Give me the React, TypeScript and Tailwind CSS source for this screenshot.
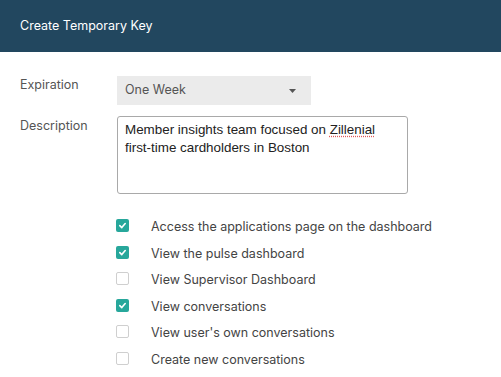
const PERMISSIONS = [
  { label: 'Access the applications page on the dashboard', checked: true },
  { label: 'View the pulse dashboard', checked: true },
  { label: 'View Supervisor Dashboard', checked: false },
  { label: 'View conversations', checked: true },
  { label: "View user's own conversations", checked: false },
  { label: 'Create new conversations', checked: false },
]

function Check({ checked }: { checked: boolean }) {
  if (!checked) {
    return <span className="block h-[13px] w-[13px] rounded-[2px] border border-[#cfcfcf] bg-white" />
  }
  return (
    <span className="flex h-[13px] w-[13px] items-center justify-center rounded-[2px] bg-[#27a79b]">
      <svg width="9" height="9" viewBox="0 0 10 10" fill="none">
        <path d="M2 5.2 L4.2 7.3 L8 2.8" stroke="white" strokeWidth="1.8" strokeLinecap="round" strokeLinejoin="round" />
      </svg>
    </span>
  )
}

export default function App() {
  return (
    <div className="h-[377px] w-[501px] overflow-hidden bg-white font-['Inter',sans-serif]">
      {/* Header */}
      <div className="flex h-[52px] items-center bg-[#22475f] px-5">
        <h1 className="text-[12.5px] text-white">Create Temporary Key</h1>
      </div>

      <div className="px-5 pt-[24px]">
        {/* Expiration */}
        <div className="flex">
          <label className="w-[97px] pt-[1px] text-[12.5px] leading-[16px] text-[#555]">Expiration</label>
          <div className="flex h-[29px] w-[194px] items-center justify-between bg-[#ebebeb] pl-2 pr-[15px]">
            <span className="text-[12.5px] text-[#555]">One Week</span>
            <svg width="7" height="4" viewBox="0 0 7 4">
              <path d="M0 0 H7 L3.5 4 Z" fill="#555" />
            </svg>
          </div>
        </div>

        {/* Description */}
        <div className="mt-[11px] flex">
          <label className="w-[97px] pt-[2px] text-[12.5px] leading-[16px] text-[#555]">Description</label>
          <div className="h-[78px] w-[291px] rounded-[3px] border border-[#a9a9a9] px-[7px] pt-[4px] font-['Liberation_Sans',sans-serif] text-[13.4px] leading-[18px] text-[#222]">
            Member insights team focused on{' '}
            <span className="underline decoration-[#e05a5a] decoration-dotted underline-offset-2">Zillenial</span>
            <br />
            first-time cardholders in Boston
          </div>
        </div>

        {/* Permissions */}
        <div className="mt-[25px] flex flex-col gap-[13.6px] pl-[96px]">
          {PERMISSIONS.map((p) => (
            <div key={p.label} className="flex h-[13px] items-center">
              <Check checked={p.checked} />
              <span className="ml-[22px] pt-[2px] text-[12.5px] leading-[13px] text-[#444]">{p.label}</span>
            </div>
          ))}
        </div>
      </div>
    </div>
  )
}
